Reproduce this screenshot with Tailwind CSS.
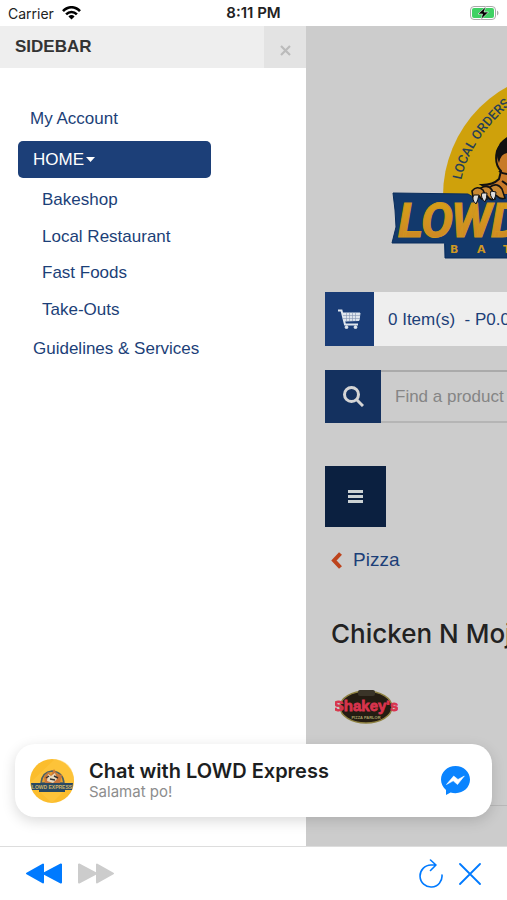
<!DOCTYPE html>
<html lang="en">
<head>
    <meta charset="UTF-8">
    <meta name="viewport" content="width=device-width, initial-scale=1.0">
    <title>LOWD Express</title>
    <script src="https://cdn.jsdelivr.net/npm/@tailwindcss/browser@4"></script>
</head>
<body class="flex h-screen flex-col overflow-hidden bg-white font-['Liberation_Sans',sans-serif] text-[17px] text-[#1c3f78]">
    <!-- Status bar -->
    <header class="grid h-[26px] shrink-0 grid-cols-3 items-center px-2 font-['Inter',sans-serif] text-[14px] text-[#222]">
        <div class="flex items-center gap-2">
            <span>Carrier</span>
            <svg class="h-[14px] w-[19px]" viewBox="0 0 19 14" fill="none" stroke="#000" stroke-width="2.6">
                <path d="M1 5.2C6-.1 13-.1 18 5.2M4.1 8.3c3.1-3.1 7.7-3.1 10.8 0"/>
                <path d="M6.4 10.4c1.8-1.8 4.4-1.8 6.2 0L9.500 13.500z" fill="#000" stroke="none"/>
            </svg>
        </div>
        <div class="text-center text-[15px] font-semibold">8:11 PM</div>
        <svg class="h-[14px] w-[29px] justify-self-end" viewBox="0 0 29 14">
            <rect x=".5" y=".5" width="25" height="13" rx="3.500" fill="#fff" stroke="#aaa"/>
            <rect x="2" y="2" width="22" height="10" rx="2" fill="#3fd164"/>
            <path d="M27 4.500c2 1 2 4 0 5z" fill="#aaa"/>
            <path d="M16 .5 8 8h4.500L11 13.500 18.500 6H14z" fill="#000" stroke="#fff" stroke-width=".6"/>
        </svg>
    </header>

    <div class="flex min-h-0 flex-1">
        <!-- Sidebar -->
        <aside class="w-[306px] shrink-0 bg-white">
            <div class="flex h-[42px] items-stretch bg-[#eee]">
                <h2 class="flex-1 pt-[11px] pl-[15px] text-[17px] leading-5 font-bold text-[#333]">SIDEBAR</h2>
                <button class="flex w-[42px] items-center justify-center bg-[#e3e3e3] pt-[6px]" aria-label="Close sidebar">
                    <svg class="size-[11px]" viewBox="0 0 11 11" stroke="#bbb" stroke-width="2.2"><path d="m1 1 9 9M10 1l-9 9"/></svg>
                </button>
            </div>
            <nav class="flex flex-col pt-8 pl-[18px]">
                <a href="#" class="px-3 leading-[37px]">My Account</a>
                <button class="mt-1 mb-[3px] flex h-[37px] w-[193px] items-center gap-[2px] rounded-[5px] bg-[#1c3f78] px-[15px] text-white">
                    HOME
                    <svg class="h-[5px] w-[9px]" viewBox="0 0 9 5" fill="#fff"><path d="M0 0h9L4.500 5z"/></svg>
                </button>
                <a href="#" class="px-6 leading-[37px]">Bakeshop</a>
                <a href="#" class="px-6 leading-[37px]">Local Restaurant</a>
                <a href="#" class="px-6 leading-[36px]">Fast Foods</a>
                <a href="#" class="px-6 leading-[37px]">Take-Outs</a>
                <a href="#" class="mt-[2px] px-[15px] leading-[37px]">Guidelines &amp; Services</a>
            </nav>
        </aside>

        <!-- Shop page behind the sidebar -->
        <main class="min-w-0 flex-1 overflow-hidden bg-[#ccc] pl-[19px]">
            <svg class="mt-[44px] ml-[65px] h-[192px] w-[360px]" viewBox="390 70 360 192">
                <defs>
                    <linearGradient id="gold" x1="0" y1="0" x2="0" y2="1">
                        <stop offset="0" stop-color="#d8a514"/>
                        <stop offset="1" stop-color="#cc8228"/>
                    </linearGradient>
                    <path id="arc" d="M461 182Q468 142 512 103"/>
                </defs>
                <path d="M443 196A125 125 0 1 1 693 196z" fill="#cfa10b"/>
                <text class="font-['Roboto',sans-serif] text-[13px] font-medium" fill="#273f56"><textPath href="#arc" startOffset="2">LOCAL ORDERS</textPath></text>
                <path d="M520 133q-17 5-23 18-3 13 4 20l-2 8q-6 6-17 6l28 18h20z" fill="#c77a28" stroke="#111" stroke-width="2"/>
                <path d="M520 131q-13 4-20 12-6 9-1 20 2-10 9-10l12 2z" fill="#111"/>
                <path d="M499 171q5 4 14 3M502 181l10 7" fill="none" stroke="#111" stroke-width="2"/>
                <path d="m393 193 75 1 5 3 40-3h220v49h-30v15H445l-1-15h-52l4-16-1-17z" fill="#12396c"/>
                <path d="m393 193 75 1 5 3 40-3M444 243h-52l4-16-1-17-2-17M445 244v14h80" fill="none" stroke="#092d5c"/>
                <text class="font-['Roboto',sans-serif] text-[48px] font-bold italic" x="398 421 451 491 524" y="237" fill="url(#gold)" stroke="#cf9620" stroke-width="1">LOWD</text>
                <text class="font-['DejaVu_Sans',sans-serif] text-[11px] font-bold" x="450 477 503 530" y="253" fill="#cf9823">BATA</text>
                <g fill="#c88731" stroke="#111" stroke-width="1.600">
                    <path d="M490 187q7-5 12 2l3 9q-4 2-8-2l-8-4z"/>
                    <path d="M481 188q7-4 11 2l3 9q-5 2-8-3l-6-2z"/>
                    <path d="M472 191q5-6 11-1l4 9q-5 2-8-3l-6 1z"/>
                </g>
                <g fill="#ddd" stroke="#111">
                    <path d="M474 195q-3 4 2 9 2-4 3-9z"/>
                    <path d="M482 193q-2 4 3 9 2-4 2-9z"/>
                    <path d="M491 191q-2 5 3 9 2-4 2-8z"/>
                </g>
            </svg>

            <div class="mt-[30px] flex h-[54px]">
                <div class="flex w-[49px] shrink-0 items-center justify-center bg-[#193c76]">
                    <svg class="h-5 w-[23px]" viewBox="0 0 23 20" fill="none" stroke="#dfe6ee">
                        <path d="M0 1.500h3.500L7 15.500h13" stroke-width="2"/>
                        <path d="M4.500 4H22l-1 7.500-14.500.5z" fill="#dfe6ee"/>
                        <path d="M8.500 4v8M11.500 4v8M14.500 4v8M17.500 4v8M5 6.500h17M5 9.500h17" stroke="#8496b3" stroke-width=".6"/>
                        <circle cx="8.500" cy="18.200" r="1.400" fill="#dfe6ee"/><circle cx="17.500" cy="18.200" r="1.400" fill="#dfe6ee"/>
                    </svg>
                </div>
                <a href="#" class="flex-1 overflow-hidden bg-[#eee] pl-[14px] leading-[55px] whitespace-nowrap">0 Item(s)&nbsp; - P0.00</a>
            </div>

            <form class="mt-6 flex h-[53px]">
                <button type="button" class="flex w-[56px] shrink-0 items-center justify-center bg-[#14315f]" aria-label="Search">
                    <svg class="size-[21px]" viewBox="0 0 21 21" fill="none" stroke="#d5d5d5" stroke-width="3"><circle cx="8.500" cy="8.500" r="7"/><path d="m13.500 13.500 6.500 6.500"/></svg>
                </button>
                <input type="text" aria-label="Find a product" placeholder="Find a product" class="min-w-0 flex-1 border-y-2 border-t-[#aaa] border-b-[#b5b5b5] bg-[#ccc] pl-[14px] placeholder:text-[#858585]">
            </form>

            <button class="mt-[43px] flex size-[61px] items-center justify-center bg-[#0b2040]" aria-label="Menu">
                <svg class="h-[13px] w-[15px]" viewBox="0 0 15 13" fill="#ccd2d4"><path d="M0 0h15v3H0zM0 5h15v3H0zM0 10h15v3H0z"/></svg>
            </button>

            <a href="#" class="mt-[21px] ml-[6px] flex items-center gap-[11px] text-[19px] leading-6">
                <svg class="h-[17px] w-[11px]" viewBox="0 0 11 17" fill="none" stroke="#bd431c" stroke-width="4"><path d="M9.500 1.500 3 8.500l6.500 7"/></svg>
                Pizza
            </a>
            <h1 class="mt-[46px] ml-[6px] font-['Inter',sans-serif] text-[26px] leading-8 font-medium whitespace-nowrap text-[#222]">Chicken N Mojos</h1>

            <svg class="mt-[39px] ml-[10px] h-[36px] w-[63px]" viewBox="0 0 63 36">
                <ellipse cx="31" cy="18" rx="26" ry="16" fill="#241c12" stroke="#8d8040" stroke-width="1.500"/>
                <rect x="23" y="1" width="17" height="6" rx="2" fill="#3a3428"/>
                <text class="font-['Liberation_Sans',sans-serif] text-[15px] font-bold" x="31" y="22" text-anchor="middle" fill="#d8344d" stroke="#d8344d" stroke-width=".8">Shakey's</text>
                <text class="font-['Liberation_Sans',sans-serif] text-[4px] font-bold" x="31" y="30" text-anchor="middle" fill="#aaa06a">PIZZA PARLOR</text>
            </svg>
            <hr class="mt-[80px] border-[#b8b8b8]">
        </main>
    </div>

    <!-- Chat bubble -->
    <a href="#" class="absolute inset-x-[15px] bottom-[83px] flex h-[73px] items-center rounded-[20px] bg-white px-[15px] font-['Inter',sans-serif] shadow-[0_4px_14px_rgba(0,0,0,0.15)]">
        <svg class="size-11 shrink-0" viewBox="0 0 44 44">
            <circle cx="22" cy="22" r="22" fill="#fbbd2d"/>
            <path d="M0 24 25 0q19 3 19 22L22 44z" fill="#ffca45" opacity=".5"/>
            <path d="M11 24q1-11 11-12 11 1 12 12z" fill="#e9a22c" stroke="#4c6065" stroke-width="1.500"/>
            <path d="m14 18 4-5 3 3 3-6 3 5 5 1-2 8H15z" fill="#ca773a"/>
            <path d="m18 15 3 2 4-3 2 6-4 4-6-2z" fill="#e9d9bd"/>
            <path d="m16 19 3-2m5 0 4 2m-8 1 5 1" stroke="#333" stroke-width="1.500"/>
            <path d="M1 24h42l-1 7h-7v2H9v-2H2z" fill="#294962"/>
            <text class="font-['Liberation_Sans',sans-serif] text-[5px] font-bold" x="22" y="30" text-anchor="middle" fill="#cfb46a">LOWD EXPRESS</text>
        </svg>
        <div class="ml-[15px] flex-1">
            <div class="text-[20px] leading-[22px] font-semibold text-[#1c1e21]">Chat with LOWD Express</div>
            <div class="text-[15px] leading-5 text-[#8d8d8d]">Salamat po!</div>
        </div>
        <svg class="mr-[7px] size-[29px]" viewBox="0 0 29 29">
            <path d="M14.500 0C6.300 0 0 6 0 13.600c0 4.400 1.900 7.800 5 10.300V29l4.600-2.500c1.500.5 3.200.7 4.900.7C22.700 27.200 29 21.200 29 13.600S22.700 0 14.500 0z" fill="#0a84ff"/>
            <path d="m5.500 18.500 7.200-8.500 4.300 3.500 6.300-3.500-6.800 8.500-4.300-3.700z" fill="#fff" stroke="#fff" stroke-width=".6"/>
        </svg>
    </a>

    <!-- Browser toolbar -->
    <footer class="flex h-[54px] shrink-0 items-center border-t border-[#ddd] bg-white px-[25px]">
        <button aria-label="Back">
            <svg class="h-[21px] w-[37px]" viewBox="0 0 37 21" fill="#007aff" stroke="#007aff" stroke-width="2" stroke-linejoin="round"><path d="M18 1.500v18L2 10.500zM36 1.500v18l-17-9z"/></svg>
        </button>
        <button class="ml-4" aria-label="Forward">
            <svg class="h-[21px] w-[37px]" viewBox="0 0 37 21" fill="#ccc" stroke="#ccc" stroke-width="2" stroke-linejoin="round"><path d="M1 1.500v18l17-9zM19 1.500v18l16-9z"/></svg>
        </button>
        <button class="ml-auto" aria-label="Reload">
            <svg class="h-[30px] w-6" viewBox="0 0 24 30" fill="none" stroke="#007aff" stroke-width="1.600" stroke-linecap="round" stroke-linejoin="round"><path d="M23 16A11 11 0 1 1 12 6h5M11.500 1l5.500 5-5.500 5.500"/></svg>
        </button>
        <button class="mr-[1px] ml-4" aria-label="Close">
            <svg class="size-[22px]" viewBox="0 0 22 22" stroke="#007aff" stroke-width="1.800" stroke-linecap="round"><path d="m1 1 20 20M21 1 1 21"/></svg>
        </button>
    </footer>
</body>
</html>
